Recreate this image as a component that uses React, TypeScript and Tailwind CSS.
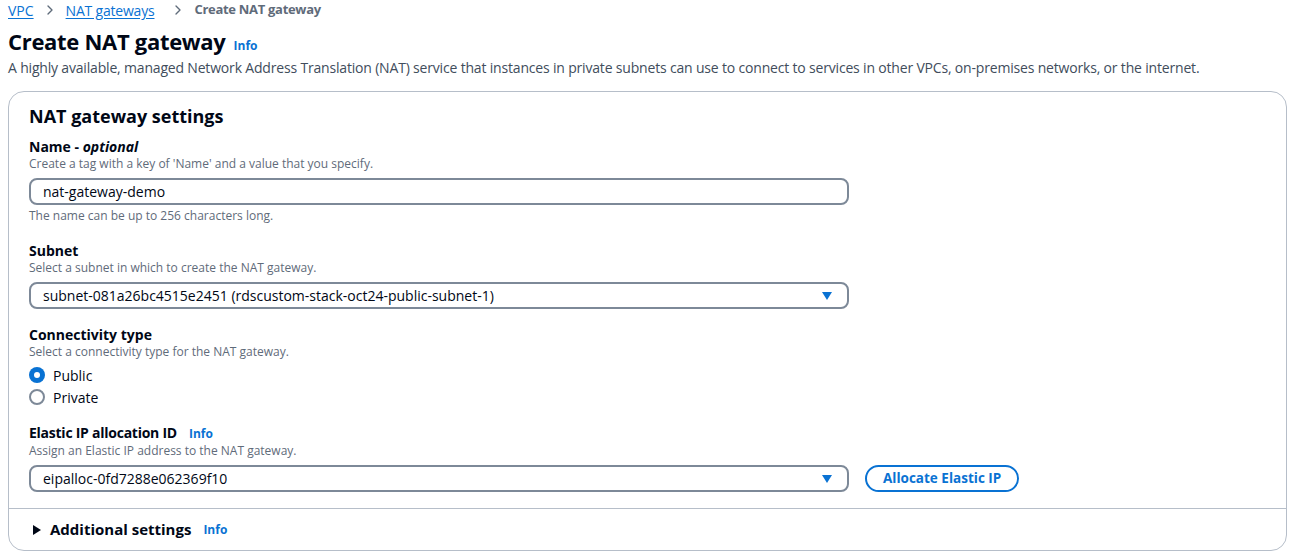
import { ChevronRight } from 'lucide-react';

const font = "font-['Open_Sans','Noto_Sans',sans-serif]";

function Info({ className = '' }: { className?: string }) {
    return <span className={`text-[12px] font-bold text-[#0972d3] ${className}`}>Info</span>;
}

function Field({
    label,
    desc,
    children,
    className = '',
}: {
    label: React.ReactNode;
    desc: string;
    children: React.ReactNode;
    className?: string;
}) {
    return (
        <div className={`flex flex-col ${className}`}>
            <div className="text-[14px] font-bold leading-[18px] text-[#000716]">{label}</div>
            <div className="text-[12px] leading-[16px] text-[#5f6b7a]">{desc}</div>
            <div className="mt-[6px]">{children}</div>
        </div>
    );
}

function Select({ value }: { value: string }) {
    return (
        <div className="flex h-[27px] w-[820px] items-center justify-between rounded-[8px] border-2 border-[#7d8998] pl-[12px] pr-[14px] text-[14px] text-[#000716]">
            <span>{value}</span>
            <svg width="12" height="10" viewBox="0 0 12 10">
                <path d="M1 1h10L6 9z" fill="#0972d3" />
            </svg>
        </div>
    );
}

function Radio({ checked, label }: { checked?: boolean; label: string }) {
    return (
        <div className="flex h-[22px] items-center gap-[8px] text-[14px] text-[#000716]">
            {checked ? (
                <span className="flex h-[16px] w-[16px] items-center justify-center rounded-full bg-[#0972d3]">
                    <span className="h-[6px] w-[6px] rounded-full bg-white" />
                </span>
            ) : (
                <span className="h-[16px] w-[16px] rounded-full border-2 border-[#7d8998]" />
            )}
            <span>{label}</span>
        </div>
    );
}

export default function App() {
    return (
        <div className={`${font} min-h-[553px] bg-white px-[8px] text-[#000716]`}>
            {/* Breadcrumbs */}
            <div className="flex h-[20px] items-center gap-[8px] text-[14px]">
                <span className="text-[#0972d3] underline underline-offset-2">VPC</span>
                <ChevronRight size={16} strokeWidth={2} className="text-[#5f6b7a]" />
                <span className="text-[#0972d3] underline underline-offset-2 tracking-[-0.2px]">NAT gateways</span>
                <ChevronRight size={16} strokeWidth={2} className="ml-[8px] text-[#5f6b7a]" />
                <span className="text-[13px] font-bold tracking-[-0.3px] text-[#5f6b7a]">Create NAT gateway</span>
            </div>

            {/* Header */}
            <div className="mt-[7px] flex h-[28px] items-baseline gap-[8px]">
                <h1 className="text-[22px] font-bold leading-[28px] tracking-[-0.3px]">Create NAT gateway</h1>
                <Info />
            </div>
            <p className="mt-[4px] text-[14px] leading-[18px] tracking-[-0.18px] text-[#414d5c]">
                A highly available, managed Network Address Translation (NAT) service that instances in private subnets can use to connect to services in other VPCs, on-premises networks, or the internet.
            </p>

            {/* Container */}
            <div className="mt-[14px] rounded-[16px] border border-[#b6bec9]">
                <div className="flex flex-col px-[20px] pb-[16px] pt-[13px]">
                    <h2 className="text-[18px] font-bold leading-[22px]">NAT gateway settings</h2>

                    <div className="mt-[11px] flex flex-col">
                        <Field
                            label={
                                <>
                                    Name - <i>optional</i>
                                </>
                            }
                            desc="Create a tag with a key of 'Name' and a value that you specify."
                        >
                            <div className="flex h-[27px] w-[820px] items-center rounded-[8px] border-2 border-[#7d8998] pl-[12px] text-[14px]">
                                nat-gateway-demo
                            </div>
                        </Field>
                        <div className="mt-[3px] text-[12px] leading-[16px] text-[#5f6b7a]">
                            The name can be up to 256 characters long.
                        </div>
                    </div>

                    <Field className="mt-[18px]" label="Subnet" desc="Select a subnet in which to create the NAT gateway.">
                        <Select value="subnet-081a26bc4515e2451 (rdscustom-stack-oct24-public-subnet-1)" />
                    </Field>

                    <Field className="mt-[17px]" label="Connectivity type" desc="Select a connectivity type for the NAT gateway.">
                        <div className="-mt-[2px] flex flex-col">
                            <Radio checked label="Public" />
                            <Radio label="Private" />
                        </div>
                    </Field>

                    <Field
                        className="mt-[16px]"
                        label={
                            <span className="flex items-baseline gap-[12px]">
                                <span className="tracking-[-0.25px]">Elastic IP allocation ID</span> <Info />
                            </span>
                        }
                        desc="Assign an Elastic IP address to the NAT gateway."
                    >
                        <div className="flex items-center gap-[16px]">
                            <Select value="eipalloc-0fd7288e062369f10" />
                            <button className="flex h-[27px] items-center rounded-full border-2 border-[#0972d3] px-[16px] text-[13.5px] font-bold text-[#0972d3]">
                                Allocate Elastic IP
                            </button>
                        </div>
                    </Field>
                </div>

                <div className="flex h-[42px] items-center gap-[8px] border-t border-[#b6bec9] pl-[23px]">
                    <svg width="10" height="12" viewBox="0 0 10 12">
                        <path d="M1 1v10l8-5z" fill="#000716" />
                    </svg>
                    <span className="text-[15px] font-bold">Additional settings</span>
                    <Info className="ml-[4px]" />
                </div>
            </div>
        </div>
    );
}
